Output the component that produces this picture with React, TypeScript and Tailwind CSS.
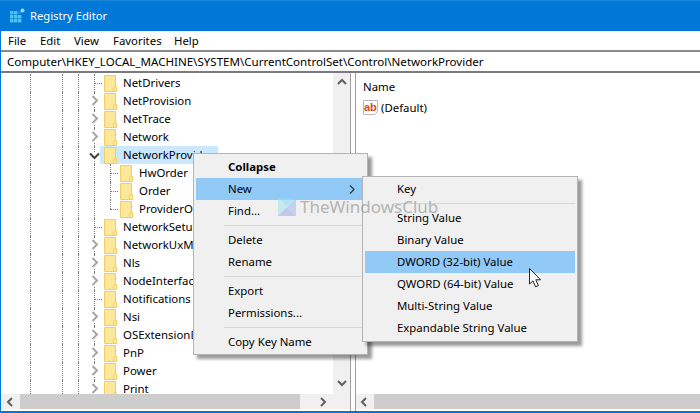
import React from "react";

type NodeKind = "leaf" | "closed" | "open";

const treeRows: { label: string; kind: NodeKind; child?: boolean; last?: boolean; selected?: boolean }[] = [
  { label: "NetDrivers", kind: "leaf" },
  { label: "NetProvision", kind: "closed" },
  { label: "NetTrace", kind: "closed" },
  { label: "Network", kind: "closed" },
  { label: "NetworkProvider", kind: "open", selected: true },
  { label: "HwOrder", kind: "leaf", child: true },
  { label: "Order", kind: "leaf", child: true },
  { label: "ProviderOrder", kind: "leaf", child: true, last: true },
  { label: "NetworkSetup", kind: "leaf" },
  { label: "NetworkUxManager", kind: "closed" },
  { label: "Nls", kind: "closed" },
  { label: "NodeInterfaces", kind: "closed" },
  { label: "Notifications", kind: "leaf" },
  { label: "Nsi", kind: "closed" },
  { label: "OSExtensionDatabase", kind: "closed" },
  { label: "PnP", kind: "closed" },
  { label: "Power", kind: "closed" },
  { label: "Print", kind: "closed" },
];

function Folder() {
  return (
    <svg width="13" height="17" viewBox="0 0 13 17" className="shrink-0">
      <path d="M0.5 0.5H11.5V16.5H0.5Z" fill="#fde79b" stroke="#f1cd66" />
      <path d="M10.5 11.5H12.5V16.5H9.5V12.5Z" fill="#fde79b" stroke="#f1cd66" />
    </svg>
  );
}

function Chevron({ open }: { open?: boolean }) {
  if (open) {
    return (
      <svg width="11" height="8" viewBox="0 0 11 8">
        <path d="M1 1.5L5.5 6L10 1.5" fill="none" stroke="#404040" strokeWidth="2" />
      </svg>
    );
  }
  return (
    <svg width="8" height="11" viewBox="0 0 8 11">
      <path d="M1.5 1L6 5.5L1.5 10" fill="none" stroke="#a6a6a6" strokeWidth="2" />
    </svg>
  );
}

function TreeRow({ label, kind, child, last, selected }: (typeof treeRows)[number]) {
  return (
    <div className="flex h-[18px] shrink-0 items-stretch">
      <span className="ml-[30px] w-[32px] border-l border-dotted border-[#7a7a7a]" />
      <span className="w-[16px] border-l border-dotted border-[#7a7a7a]" />
      <span className="w-[16px] border-l border-dotted border-[#7a7a7a]" />
      {/* expander column, guide line runs through it */}
      <span className="relative w-[6px] shrink-0 border-l border-dotted border-[#7a7a7a]">
        {kind === "leaf" && !child && (
          <span className="absolute left-0 top-[9px] w-[7px] border-t border-dotted border-[#7a7a7a]" />
        )}
        {kind !== "leaf" && (
          <span className={`absolute flex items-center justify-center bg-white ${kind === "open" ? "left-[-6px] top-[6px] h-[8px] w-[11px]" : "left-[-4px] top-[3px] h-[11px] w-[8px]"}`}>
            <Chevron open={kind === "open"} />
          </span>
        )}
      </span>
      {child ? (
        <>
          <span className="relative ml-[10px] w-[10px] shrink-0">
            <span className={`absolute left-0 top-0 border-l border-dotted border-[#7a7a7a] ${last ? "h-[9px]" : "h-[18px]"}`} />
            <span className="absolute left-0 top-[9px] w-[8px] border-t border-dotted border-[#7a7a7a]" />
          </span>
          <span className="flex items-center gap-[6px]">
            <Folder />
            <span className="whitespace-nowrap">{label}</span>
          </span>
        </>
      ) : (
        <span className={`flex items-center gap-[6px] pl-[4px] pr-[4px] ${selected ? "bg-[#cce8ff]" : ""}`}>
          <Folder />
          <span className="whitespace-nowrap">{label}</span>
        </span>
      )}
    </div>
  );
}

function MenuRow({ label, bold, active, arrow }: { label: string; bold?: boolean; active?: boolean; arrow?: boolean }) {
  return (
    <div className={`flex h-[22px] items-center justify-between pl-[32px] pr-[10px] ${active ? "bg-[#91c9f7]" : ""} ${bold ? "font-bold" : ""}`}>
      <span className="whitespace-nowrap">{label}</span>
      {arrow && (
        <svg width="6" height="9" viewBox="0 0 6 9">
          <path d="M1 0.5L5 4.5L1 8.5" fill="none" stroke="#333" strokeWidth="1.2" />
        </svg>
      )}
    </div>
  );
}

function MenuSep() {
  return <div className="ml-[28px] mt-[3px] mb-[3px] h-px bg-[#d7d7d7]" />;
}

function ScrollButton({ dir }: { dir: "left" | "right" | "up" | "down" }) {
  const d = {
    left: "M6 1L2 5L6 9",
    right: "M2 1L6 5L2 9",
    up: "M1 6L5 2L9 6",
    down: "M1 2L5 6L9 2",
  }[dir];
  return (
    <svg width="10" height="10" viewBox="0 0 10 10">
      <path d={d} fill="none" stroke="#606060" strokeWidth="2" />
    </svg>
  );
}

export default function App() {
  return (
    <div className="relative flex h-[413px] w-[700px] flex-col overflow-hidden bg-white font-['Noto_Sans',sans-serif] text-[11.4px] text-black">
      {/* Title bar */}
      <div className="flex h-[31px] shrink-0 items-center gap-[7px] border-t border-[#1a86dc] bg-[#0078d7] pl-[10px] text-[11.2px] text-white">
        <svg width="13" height="16" viewBox="0 0 13 16" className="overflow-visible">
          {[0, 4, 8].map((x) =>
            [3, 7, 11].map((y) => (
              <rect key={`${x}-${y}`} x={x} y={y} width="3.4" height="3.4" fill={x === 8 && y === 3 ? "#0f8ee0" : "#4fc3ee"} />
            )),
          )}
          <circle cx="12.5" cy="2.5" r="2" fill="#8fdcf7" />
        </svg>
        <span>Registry Editor</span>
      </div>

      <div className="flex min-h-0 flex-1 flex-col border-b-[2px] border-l border-[#0078d7]">
        {/* Menu bar */}
        <div className="flex h-[19px] shrink-0 items-center pl-[7px] pt-[1px]">
          <span className="w-[32px]">File</span>
          <span className="w-[34px]">Edit</span>
          <span className="w-[39px]">View</span>
          <span className="w-[61px]">Favorites</span>
          <span>Help</span>
        </div>
        {/* Address bar */}
        <div className="flex h-[23px] shrink-0 items-center border-t-[2px] border-b-[2px] border-t-[#8a8a8a] border-b-[#7a7a80] pl-[6px] text-[11.55px]">
          <span className="whitespace-nowrap">Computer\HKEY_LOCAL_MACHINE\SYSTEM\CurrentControlSet\Control\NetworkProvider</span>
        </div>

        <div className="flex min-h-0 flex-1">
          {/* Tree pane */}
          <div className="flex w-[349px] shrink-0 flex-col">
            <div className="flex min-h-0 flex-1">
              <div className="min-h-0 flex-1 overflow-hidden pt-[1px]">
                <div className="ml-[-1px] flex flex-col">
                  {treeRows.map((row) => (
                    <TreeRow key={row.label} {...row} />
                  ))}
                </div>
              </div>
              <div className="flex w-[17px] shrink-0 flex-col items-center justify-between bg-[#f0f0f0] py-[5px]">
                <ScrollButton dir="up" />
                <ScrollButton dir="down" />
              </div>
            </div>
            <div className="flex h-[15px] shrink-0 items-stretch bg-[#f0f0f0]">
              <span className="flex w-[19px] items-center justify-center">
                <ScrollButton dir="left" />
              </span>
              <span className="w-[280px] bg-[#cdcdcd]" />
              <span className="flex w-[33px] items-center justify-end pr-[4px]">
                <ScrollButton dir="right" />
              </span>
            </div>
            <div className="h-[2px] shrink-0" />
          </div>

          {/* Splitter */}
          <div className="w-[6px] shrink-0 border-x border-[#a0a0a0]" />

          {/* Value pane */}
          <div className="flex min-w-0 flex-1 flex-col">
            <div className="flex-1 pl-[7px] pt-[5px]">
              <div className="flex h-[18px] items-center">Name</div>
              <div className="mt-[2px] flex h-[18px] items-center gap-[3px]">
                <svg width="15" height="15" viewBox="0 0 15 15">
                  <path d="M0.5 0.5H14.5V11.5L12 14.5H0.5Z" fill="#fff" stroke="#b9b9b9" />
                  <text x="1" y="10.5" fontSize="11" fontWeight="700" fill="#d9481c" fontFamily="'Liberation Sans',sans-serif">ab</text>
                </svg>
                <span className="pt-[1px]">(Default)</span>
              </div>
            </div>
            <div className="flex h-[15px] shrink-0 items-stretch">
              <span className="flex w-[18px] items-center justify-center bg-[#f0f0f0]">
                <ScrollButton dir="left" />
              </span>
              <span className="flex-1 bg-[#cdcdcd]" />
            </div>
            <div className="h-[2px] shrink-0" />
          </div>
        </div>
      </div>

      {/* Context menu */}
      <div className="absolute left-[193px] top-[153px] h-[202px] w-[175px] border border-[#b4b4b4] bg-[#f0f0f0] p-[2px] shadow-[4px_4px_3px_rgba(0,0,0,0.4)]">
        <MenuRow label="Collapse" bold />
        <MenuRow label="New" active arrow />
        <MenuRow label="Find..." />
        <MenuSep />
        <MenuRow label="Delete" />
        <MenuRow label="Rename" />
        <MenuSep />
        <MenuRow label="Export" />
        <MenuRow label="Permissions..." />
        <MenuSep />
        <MenuRow label="Copy Key Name" />
      </div>

      {/* New submenu */}
      <div className="absolute left-[362px] top-[176px] h-[166px] w-[216px] border border-[#b4b4b4] bg-[#f0f0f0] px-[2px] pt-[1px] shadow-[4px_4px_3px_rgba(0,0,0,0.4)]">
        <MenuRow label="Key" />
        <MenuSep />
        <MenuRow label="String Value" />
        <MenuRow label="Binary Value" />
        <MenuRow label="DWORD (32-bit) Value" active />
        <MenuRow label="QWORD (64-bit) Value" />
        <MenuRow label="Multi-String Value" />
        <MenuRow label="Expandable String Value" />
      </div>

      {/* Watermark */}
      <div className="absolute left-[278px] top-[198px] flex items-center gap-[4px] text-[17px] leading-[18px] text-[#8c8c8c] opacity-60">
        <svg width="18" height="18" viewBox="0 0 18 18">
          <path d="M0 0H18L9 9Z" fill="#8fdcf5" />
          <path d="M0 0L9 9L0 18Z" fill="#a7e3f0" />
          <path d="M18 0L9 9L18 18Z" fill="#9fc4ee" />
          <path d="M0 18L9 9L18 18Z" fill="#a3aeea" />
        </svg>
        <span>TheWindowsClub</span>
      </div>

      {/* Mouse cursor */}
      <svg width="14" height="20" viewBox="0 0 14 20" className="absolute left-[529px] top-[268px]">
        <path d="M0.5 0.5V16L4 12.8L6.6 18.8L9.4 17.6L6.8 11.8H11.6Z" fill="#fff" stroke="#222" strokeWidth="1" />
      </svg>
    </div>
  );
}
